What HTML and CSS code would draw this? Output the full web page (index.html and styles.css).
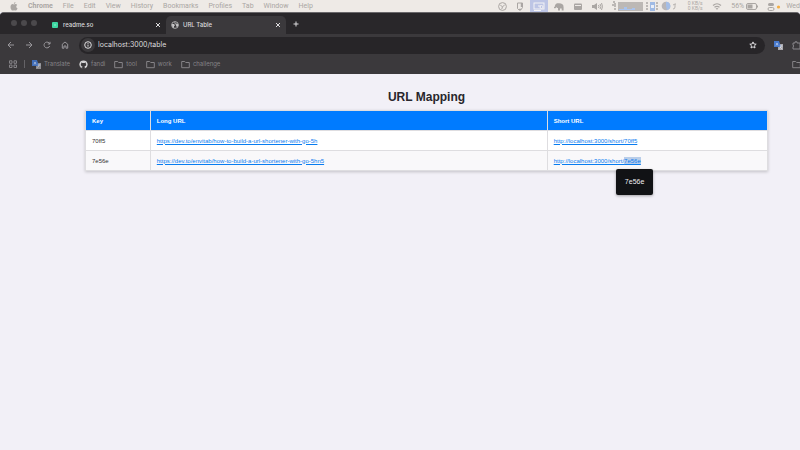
FILE: index.html
```html
<!DOCTYPE html>
<html lang="en">
<head>
<meta charset="utf-8">
<title>URL Table</title>
<link rel="stylesheet" href="styles.css">
</head>
<body>
<header class="menubar">
  <svg class="apple" viewBox="0 0 8 9"><path d="M5.4 0C5.5 1 4.800 1.900 3.900 1.900 3.800 1 4.500.2 5.400 0ZM4 2.400C4.500 2.400 4.900 2 5.600 2c.7 0 1.300.4 1.600.9-1.400.8-1.200 2.700.3 3.300C7.100 7.400 6.300 8.600 5.500 8.600 5 8.600 4.700 8.300 4.100 8.300S3.200 8.600 2.700 8.600C1.700 8.600.5 6.800.5 4.900.5 3 1.600 2 2.600 2c.6 0 1 .4 1.400.4Z" fill="currentColor"/></svg>
  <nav class="menus">
    <b>Chrome</b><span>File</span><span>Edit</span><span>View</span><span>History</span><span>Bookmarks</span><span>Profiles</span><span>Tab</span><span>Window</span><span>Help</span>
  </nav>
  <div class="status">
    <svg width="9" height="9" viewBox="0 0 9 9" class="line"><circle cx="4.500" cy="4.500" r="3.900"/><path d="M2.300 3.200 4.500 4.700 6.700 3M4.500 4.700 3.800 7"/></svg>
    <svg width="8" height="9" viewBox="0 0 8 9" class="line"><path d="M1.500 1h5v4.500L4.800 8H3L1.500 6.500Z"/><path d="M5.500 1v4M3 7.500h2" stroke-width="1.400"/></svg>
    <span class="active-status"><svg width="12" height="9" viewBox="0 0 12 9" fill="none" stroke="#f4f3f5"><rect x="1" y="1" width="10" height="6"/><path d="M1 8.500h7M5 4h3"/><circle cx="8.500" cy="5" r="1.500"/></svg></span>
    <svg width="10" height="9" viewBox="0 0 10 9" fill="currentColor"><path d="M0 5C.6 5 .8 4.500 1 3.500 1.500 1.500 3 1 5 1.200c3 0 4.600 1 4.600 4V8.500H7.700V6.500H6V8.500H4V6C3 6 2.500 5.500 2.300 5 2 6.200 1 6.500 0 6Z"/></svg>
    <svg width="10" height="9" viewBox="0 0 10 9"><rect x="1" y="1.500" width="8" height="6.500" rx="1" fill="currentColor"/><path d="M2 3.500h6" stroke="#eeeae6"/></svg>
    <svg width="11" height="9" viewBox="0 0 11 9"><path d="M0 3h2l3-2v7L2 6H0Z" fill="currentColor"/><path d="M6.500 3q1 1.500 0 3M8 2q2 2.500 0 5M9.500 1q2 3.500 0 7" class="line"/></svg>
    <svg width="66" height="10" viewBox="0 0 66 10"><path d="M1 1h2v2H1v2h2v4M35 1v8M45 1v8" stroke="#bcb8b5" fill="none" stroke-dasharray="2 1" stroke-width="2"/><rect x="6" y="1" width="25" height="9" fill="#bcb8b5"/><path d="M7 8h5V6h3v2h5V7h3v2H7Z" fill="#a9c3ed"/><rect x="38" y="1" width="5" height="9" fill="#9fbae4"/><path d="M39 4h3v3h-3Z" fill="#e9eef7"/><circle cx="54" cy="5" r="4.300" fill="#b8b6b8"/><path d="M54 .7A4.300 4.300 0 0 1 55 9.200L54 5Z" fill="#a4bee7"/><path d="M61 8q2 0 2-2V3l-2 1M63 3h1" stroke="#b7b3b0" fill="none"/></svg>
    <span class="net">0 KB/s<br>0 KB/s</span>
    <svg width="10" height="9" viewBox="0 0 10 9" class="line"><path d="M1 3.500q4-3.500 8 0M2.500 5.300q2.500-2 5 0M4 7q1-.8 2 0" stroke-width="1.200"/></svg>
    <span class="power">56%<svg width="12" height="7" viewBox="0 0 12 7"><rect x=".5" y=".5" width="10" height="6" rx="1.500" class="line"/><rect x="1.500" y="1.500" width="5" height="4" fill="currentColor"/><path d="M11.500 2.500v2" stroke="currentColor"/></svg></span>
    <svg width="14" height="9" viewBox="0 0 14 9"><rect x="1" y="1" width="6" height="3" rx="1.500" fill="currentColor"/><rect x="1" y="5.500" width="6" height="3" rx="1.500" class="line"/><circle cx="11.500" cy="5" r="1.600" fill="#f4ae43"/></svg>
    <span class="day">Wed</span>
  </div>
</header>

<section class="browser">
  <div class="tabs">
    <div class="lights"><i></i><i></i><i></i></div>
    <div class="tab">
      <svg class="favicon" viewBox="0 0 8 8"><rect x="1" y="1" width="6" height="6" rx="1" fill="#3ed6a2"/><path d="M4 3v2" stroke="#8defca"/></svg>
      <span>readme.so</span><button aria-label="Close readme.so"><svg viewBox="0 0 6 6"><path d="m1 1 4 4m0-4L1 5"/></svg></button>
    </div>
    <div class="tab current">
      <svg class="favicon" viewBox="0 0 8 8"><circle cx="4" cy="4" r="3.400" fill="none" stroke="#c6c5c7" stroke-width=".8"/><path d="M1 3h2l1 1.300-1 .9v2L1.200 5.500ZM4.500.8 4 2l1 .8 1-.3 1.200 1V5L6 6 5 5l.3-1.200L3.800 3 3.500 1Z" fill="#c6c5c7"/></svg>
      <span>URL Table</span><button aria-label="Close URL Table"><svg viewBox="0 0 6 6"><path d="m1 1 4 4m0-4L1 5"/></svg></button>
    </div>
    <button class="new-tab" aria-label="New tab"><svg viewBox="0 0 6 6"><path d="M3 .5v5M.5 3h5"/></svg></button>
  </div>

  <div class="toolbar">
    <div class="nav-buttons">
      <button aria-label="Back"><svg viewBox="0 0 8 8"><path d="M7 4H1m3-3L1 4l3 3"/></svg></button>
      <button aria-label="Forward"><svg viewBox="0 0 8 8"><path d="M1 4h6M4 1l3 3-3 3"/></svg></button>
      <button aria-label="Reload"><svg viewBox="0 0 8 8"><path d="M6.700 5A2.900 2.900 0 1 1 6 1.900L7 3M7 .8V3H4.800"/></svg></button>
      <button aria-label="Home"><svg viewBox="0 0 8 8"><path d="M1.300 3.200 4 1l2.700 2.200v4H5V5H3v2.200H1.300Z"/></svg></button>
    </div>
    <div class="address">
      <span class="site-info"><svg viewBox="0 0 8 8"><circle cx="4" cy="4" r="3.300"/><path d="M4 3.600v2M4 2v.8"/></svg></span>
      <input type="text" value="localhost:3000/table" aria-label="Address">
      <button class="star" aria-label="Bookmark this page"><svg viewBox="0 0 8 8"><path d="m4 .9.9 2.100 2.300.2-1.700 1.500.5 2.300-2-1.200-2 1.200.5-2.300L.8 3.200 3.100 3Z"/></svg></button>
    </div>
    <div class="extensions">
      <button aria-label="Google Translate"><svg viewBox="0 0 9 9"><path d="M4 3h5v6H4Z" fill="#aaa9ae"/><path d="M0 0h5l2 6H0Z" fill="#4779cd"/><path d="M2 4.500 3 2l1 2.500M5.500 5h3M7 4.500q0 2-1.500 3M6 6l2 2" fill="none" stroke="#e4e7ef" stroke-width=".6"/></svg></button>
      <button aria-label="Extensions"><svg viewBox="0 0 9 9"><path d="M1 2h2V.8h2V2h3v6H1V6q1.500-1 0-2Z"/></svg></button>
    </div>
  </div>

  <div class="bookmarks">
    <button class="apps" aria-label="Apps"><svg viewBox="0 0 8 8"><path d="M.5.8h2.500v2.500H.5Zm4.500 0h2.500v2.500H5ZM.5 5h2.500v2.500H.5ZM5 5h2.500v2.500H5Z"/></svg></button>
    <i class="divider"></i>
    <div class="links">
      <a href="#"><svg viewBox="0 0 9 9"><path d="M4 3h5v6H4Z" fill="#8e8d92" stroke="none"/><path d="M0 0h5l2 6H0Z" fill="#416eb9" stroke="none"/><path d="M2 4.500 3 2l1 2.500M5.500 5h3M7 4.500q0 2-1.500 3" stroke="#d6dbe7" stroke-width=".6"/></svg>Translate</a>
      <a href="#"><svg viewBox="0 0 9 9"><path d="M4.500.4A4.100 4.100 0 0 0 3.200 8.400V7.300c-1.200.2-1.300-.8-1.700-.9.7-.1.900.8 1.700.5 0-.3.200-.5.300-.6-2-.3-2-1.800-1.300-2.600-.1-.4 0-1 .1-1.200.5 0 .8.300 1.100.5h2.200c.3-.2.7-.5 1.100-.5.2.4.200.8.100 1.200.7.900.6 2.300-1.300 2.600.3.300.3.600.3 2.100A4.100 4.100 0 0 0 4.500.4Z" fill="#d4d3d5" stroke="none"/></svg>fandi</a>
      <a href="#"><svg class="folder" viewBox="0 0 9 9"><path d="M.7 7.700V1.500h3l1 1h3.600v5.200Z"/></svg>tool</a>
      <a href="#"><svg class="folder" viewBox="0 0 9 9"><path d="M.7 7.700V1.500h3l1 1h3.600v5.200Z"/></svg>work</a>
      <a href="#"><svg class="folder" viewBox="0 0 9 9"><path d="M.7 7.700V1.500h3l1 1h3.600v5.200Z"/></svg>challenge</a>
    </div>
    <div class="all-bookmarks"><i class="divider"></i><svg viewBox="0 0 9 9"><path d="M.7 7.700V1.500h3l1 1h3.600v5.200Z"/></svg></div>
  </div>
</section>

<main>
  <h1>URL Mapping</h1>
  <table>
    <thead><tr><th class="key">Key</th><th class="long">Long URL</th><th>Short URL</th></tr></thead>
    <tbody>
      <tr><td>70ff5</td><td><a href="#">https://dev.to/envitab/how-to-build-a-url-shortener-with-go-5h</a></td><td><a href="#">http://localhost:3000/short/70ff5</a></td></tr>
      <tr><td>7e56e</td><td><a href="#">https://dev.to/envitab/how-to-build-a-url-shortener-with-go-5hn5</a></td><td><a href="#">http://localhost:3000/short/<span class="selected">7e56e<span class="tooltip">7e56e</span></span></a></td></tr>
    </tbody>
  </table>
</main>
</body>
</html>
```
FILE: styles.css
```css
* { box-sizing: border-box; }
body {
  margin: 0;
  min-height: 100vh;
  overflow: hidden;
  background: #f2f0f7;
  color: #333;
  font: 6px/8px "Liberation Sans", sans-serif;
}
button { padding: 0; border: 0; background: none; color: inherit; display: flex; }
svg { display: block; flex: none; }
a { color: inherit; text-decoration: none; }

.menubar {
  display: flex;
  align-items: center;
  height: 12px;
  padding-left: 10px;
  background: #eeeae6;
  color: #aaa6a3;
  font: 7px/10px Roboto, sans-serif;
  white-space: nowrap;
}
.apple { width: 8px; height: 9px; margin-right: 10px; }
.menus { display: flex; gap: 10px; }
.status { display: flex; align-items: center; gap: 9px; margin-left: auto; }
.line { fill: none; stroke: currentColor; }
.active-status { display: flex; align-items: center; justify-content: center; width: 18px; height: 12px; margin: 0 -3px; background: #bdc5e5; }
.net { width: 16px; font-size: 5px; line-height: 5px; text-align: center; }
.power { display: flex; align-items: center; gap: 2px; }
.day { margin-left: -4px; }

.browser {
  overflow: hidden;
  border-top: 1px solid #69676a;
  border-radius: 4px 4px 0 0;
  background: #3b393c;
  color: #dddcde;
  font: 6px/10px Inter, sans-serif;
}
.browser svg { width: 8px; height: 8px; fill: none; stroke: currentColor; stroke-width: 1; }
.tabs { display: flex; align-items: flex-end; height: 21px; background: #29272a; font-weight: 500; }
.lights { display: flex; gap: 4px; width: 46px; padding: 0 0 8px 11px; }
.lights i { width: 6px; height: 6px; border-radius: 50%; background: #4b494c; }
.tab { display: flex; align-items: center; gap: 4px; width: 120px; height: 18px; padding: 0 5px; border-radius: 5px 5px 0 0; }
.tab.current { background: #3b393c; }
.tab button { margin-left: auto; }
.browser .tab button svg, .browser .new-tab svg { width: 6px; height: 6px; }
.browser .favicon { stroke: none; }
.new-tab { padding: 0 7px 7px; }

.toolbar { display: flex; align-items: center; height: 22px; padding-left: 7px; }
.nav-buttons { display: flex; gap: 10px; width: 72px; color: #98969a; }
.address { display: flex; align-items: center; flex: 1; height: 17px; padding: 0 8px 0 2px; border-radius: 9px; background: #272528; }
.site-info { display: flex; align-items: center; justify-content: center; width: 14px; height: 14px; border-radius: 50%; background: #3b393c; }
.address input { flex: 1; min-width: 0; margin: 0; padding: 0 3px; border: 0; outline: 0; background: none; color: #dddcde; font: 7px/10px Inter, sans-serif; }
.extensions { display: flex; gap: 9px; width: 35px; padding-left: 9px; color: #89878b; }
.browser .extensions svg, .browser .links svg, .browser .all-bookmarks svg { width: 9px; height: 9px; }
.browser .extensions button:first-child svg { stroke: none; }

.bookmarks { display: flex; align-items: center; height: 18px; padding: 0 0 2px 9px; color: #858387; }
.divider { width: 1px; height: 8px; background: #656367; }
.apps { margin-right: 7px; }
.links { display: flex; gap: 9px; margin-left: 7px; }
.links a { display: flex; align-items: center; gap: 3px; }
.all-bookmarks { display: flex; gap: 8px; width: 16px; margin-left: auto; }

main { padding: 16px 32px 0 85px; }
h1 { margin: 0 0 6px; color: #28262c; font-size: 12px; line-height: 14px; text-align: center; }
table {
  width: 100%;
  table-layout: fixed;
  border-collapse: collapse;
  background: #fff;
  box-shadow: 0 1px 3px #0003;
}
.key { width: 9.5%; }
.long { width: 58.2%; }
th, td { height: 20px; padding: 0 6px; border: 1px solid #dedde0; text-align: left; }
th { background: #007bff; color: #fff; }
tbody tr:nth-child(2) { background: #f9f8fa; }
td a { color: #087cf0; text-decoration: underline; }
.selected { display: inline-block; position: relative; background: #b9cde9; text-decoration: underline; }
.tooltip {
  position: absolute;
  top: 12px;
  left: -8px;
  width: 37px;
  border-radius: 2px;
  background: #111215;
  box-shadow: 0 1px 3px #0005;
  color: #f0f0f1;
  font-size: 7px;
  line-height: 26px;
  text-align: center;
}
```
